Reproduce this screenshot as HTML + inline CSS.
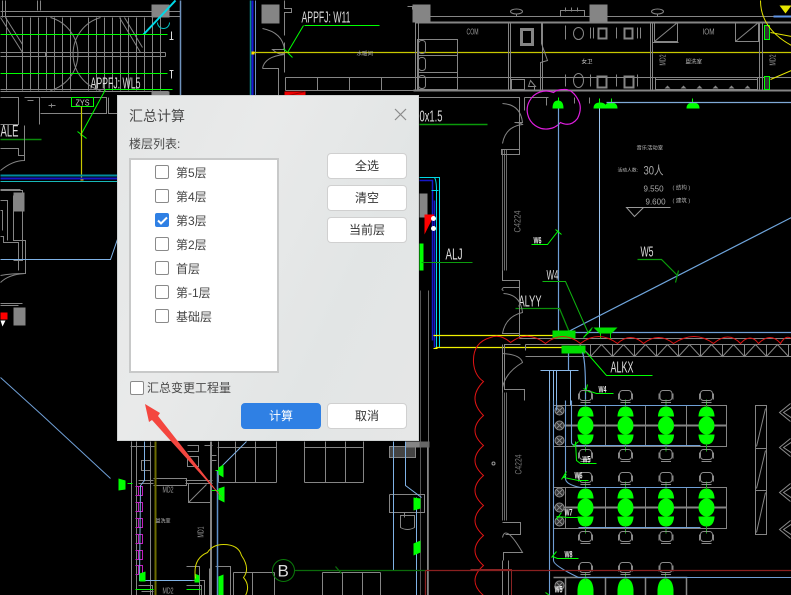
<!DOCTYPE html>
<html><head><meta charset="utf-8">
<style>
html,body{margin:0;padding:0;background:#000}
#p{position:relative;width:791px;height:595px;overflow:hidden;background:#000;font-family:"Liberation Sans","Noto Sans CJK SC",sans-serif}
svg.c{position:absolute;left:0;top:0;filter:blur(.3px)}
svg text{font-family:"Liberation Sans","Noto Sans CJK SC",sans-serif}
#d{position:absolute;left:117px;top:95px;width:302px;height:346px;box-sizing:border-box;border:1px solid #cfd2d2;background:linear-gradient(115deg,#e4e6e6,#e9eaea 35%,#e2e5e5 70%,#e6e7e7)}
#d div{position:absolute;box-sizing:border-box}
.t{color:#4a4a4a;white-space:nowrap}
#l{left:11px;top:62px;width:150px;height:215px;border:2px solid #c8c9c9;background:#fff}
.k{width:14px;height:14px;border:1px solid #8a8a8a;border-radius:2px;background:#fff}
.f{font-size:12px;line-height:18px;color:#444;white-space:nowrap}
.b{width:80px;height:26px;border:1px solid #d0d0d0;border-radius:4px;background:#fff;font-size:12px;line-height:24px;text-align:center;color:#333}
</style></head><body><div id="p">
<svg class="c" width="791" height="595" viewBox="0 0 791 595" fill="none">
<defs>
<g id="chair" stroke="#8a8a8a" stroke-width="1"><rect x="-6" y="-6" width="12" height="10" rx="3"/><path d="M-7-3V3M7-3V3M-5 6H5"/></g>
<g id="lt"><path d="M-8-10Q-7-19 0-19Q7-19 8-10Z" fill="#0f0"/><ellipse cx="0" cy="0" rx="8" ry="9" fill="#0f0"/><path d="M-8 10Q-7 19 0 19Q7 19 8 10Z" fill="#0f0"/><path d="M0-26V-18M0 18V26" stroke="#1fa51f"/><path d="M-8-9.500H8M-8 9.500H8" stroke="#0f0"/></g>
<g id="sc" stroke="#8a8a8a" fill="#333"><circle cx="0" cy="0" r="4.500"/><path d="M-3-3L3 3M3-3L-3 3"/></g>
<g id="mg" stroke="#c01fc0" stroke-width="1"><path d="M0 0H7V9H0M3 0V9"/></g>
<g id="chv" stroke="#8a8a8a"><path d="M12 0L1 9L12 18M14 3L5 9L14 15"/></g>
</defs>
<g transform="translate(.5 .5)">
<!-- left stairs -->
<g stroke="#858585" stroke-width="1">
<path d="M0 11H180M0 16H180M0 89H168M0 91H168M2 0V17M5 0V17M37 0V10M40 0V10"/>
<path d="M6 17V90M22 17V90M30 17V90M38 17V90M46 17V90M54 17V90M62 17V90M70 17V90M88 17V90M96 17V90M104 17V90M112 17V90M120 17V90M128 17V90M136 17V90M144 17V90M152 17V90M160 17V90"/>
<path d="M0 52H165M0 56H165M165 52V56M45 52V56"/>
<path d="M0 17L22 52M5 17L22 44M119 17L140 52M124 17L142 47"/>
<path d="M50 17A38 38 0 0 1 50 90M100 17A38 38 0 0 0 100 90"/>
<path d="M0 97H18V124H0M24 97H39V124M40 97H106V113H40M108 97V113H159"/>
<path d="M51 103V107M48 105H55M27 100H33M39 97V113"/>
</g>
<rect x="151" y="4" width="18" height="13" fill="#858585"/>
<rect x="151" y="91" width="18" height="5" fill="#858585"/>
<path d="M143 34L175 0" stroke="#00d9e8" stroke-width="2"/>
<path d="M157 22a6 6 0 0 0 12 0" stroke="#00c4c4"/>
<path d="M180 0V96" stroke="#6f93bd" stroke-width="1.500"/>
<path d="M0 34H167M0 73H167" stroke="#0f0"/>
<path d="M105 89H172M105 89L80 135M77 131L86 138" stroke="#0f0"/>
<rect x="71" y="97" width="22" height="9" stroke="#0f0"/>
<text x="75" y="105" font-size="8" fill="#ccc" textLength="14" lengthAdjust="spacingAndGlyphs">ZYS</text>
<path d="M81 106V178" stroke="#c8c800" stroke-width="1.200"/>
<rect x="80" y="177" width="3" height="3" fill="#ffd000"/>
<path d="M171 31V39M169 39H173M171 70V78M169 70H173" stroke="#ddd"/>
<text x="90" y="88" font-size="16" fill="#ddd" textLength="50" lengthAdjust="spacingAndGlyphs">APPFJ: WL5</text>
<text x="0" y="136" font-size="17" fill="#ddd" textLength="18" lengthAdjust="spacingAndGlyphs">ALE</text>
<path d="M0 139H41" stroke="#0a8a0a" stroke-width="1.500"/>
<path d="M0 175H117" stroke="#008b9c" stroke-width="2"/>
<path d="M0 178H117" stroke="#1717c8" stroke-width="2"/>
<path d="M0 181H117" stroke="#18b9b9"/>
<g stroke="#858585">
<path d="M0 148H18V155H24V125M0 170Q12 160 24 160V127"/>
<path d="M0 190H22V260H13M0 189H20M0 236H3V242H18V270M0 275Q10 273 25 273V240H13V195M0 200H7V240M0 210H2V230"/>
<path d="M0 303H22M0 305H18M0 282Q8 274 24 273"/>
</g>
<rect x="13" y="192" width="11" height="19" fill="#858585"/>
<rect x="13" y="307" width="12" height="18" fill="#858585"/>
<rect x="0" y="312" width="7" height="7" fill="#f00"/>
<path d="M0 320H5L2 326Z" fill="#fff"/>
<path d="M0 259H110L120 230" stroke="#7fb2e6"/>
<path d="M0 377L42 415L110 478" stroke="#6f9fd6"/>

<!-- center column -->
<path d="M250 0V96" stroke="#0a8a8a" stroke-width="1.500"/>
<path d="M252 0V96" stroke="#1717d8" stroke-width="2"/>
<path d="M255 0V96" stroke="#6f93bd"/>
<rect x="261" y="4" width="18" height="19" fill="#858585"/>
<g stroke="#858585">
<path d="M262 28Q282 32 284 49H272Q280 56 284 52M262 68Q264 56 284 54M262 68H278V96M284 0V8H291V12H284V35M284 42V72M285 77H791M285 90H791M285 77V90"/>
<path d="M317 77V90M349 77V90M381 77V90"/>
</g>
<path d="M303 25L287 52M283 48L292 57M304 25H379" stroke="#0f0"/>
<text x="301" y="22" font-size="16" fill="#ddd" textLength="49" lengthAdjust="spacingAndGlyphs">APPFJ: W11</text>
<path d="M252 52H791" stroke="#c8c800" stroke-width="1.300"/>
<rect x="251" y="51" width="3" height="3" fill="#ffe000"/>
<text x="356" y="55" font-size="5.500" fill="#aaa">水暖间</text>
<rect x="284" y="91" width="21" height="5" fill="#e00"/>
<path d="M305 91L284 96" stroke="#900"/>

<!-- rooms top right -->
<g stroke="#858585" stroke-width="1">
<path d="M407 6H412V9M430 16H589M607 16H791M430 22H508M510 22H650"/>
<path d="M415 22H791" stroke-width="2"/>
<path d="M413 90H791" stroke-width="2"/>
<path d="M400 97H517M524 97H548"/>
<path d="M415 22V90M418 22V90M508 22V90M510 22V90M650 22V90M652 22V90M759 22V90M762 22V90"/>
<rect x="417" y="39" width="40" height="50"/>
<path d="M417 55H457M417 72H457M418 39V89"/>
<rect x="418" y="40" width="7" height="13" rx="3"/><rect x="418" y="57" width="7" height="13" rx="3"/><rect x="418" y="75" width="7" height="13" rx="3"/>
<path d="M542 22V90M541 23V43L547 60L540 62V90"/>
<rect x="521" y="29" width="11" height="15" stroke-width="3"/>
<rect x="511" y="79" width="13" height="10"/>
<rect x="598" y="28" width="8" height="10" stroke-width="2"/><rect x="624" y="28" width="8" height="10" stroke-width="2"/>
<rect x="597" y="76" width="9" height="11" stroke-width="2"/><rect x="624" y="76" width="9" height="11" stroke-width="2"/>
<ellipse cx="578" cy="33" rx="5" ry="6"/><ellipse cx="578" cy="80" rx="5" ry="7"/>
<path d="M565 25V39M590 27V38M593 27V38M616 27V38M637 27V38M640 27V38M565 74V86M590 74V86M616 74V86M637 74V86"/>
<rect x="654" y="22" width="23" height="19"/><path d="M654 41L677 22"/>
<rect x="735" y="22" width="23" height="19"/><path d="M735 41L758 22"/>
<path d="M652 42H678"/>
<rect x="655" y="77" width="102" height="12"/><path d="M655 79H757"/>
<path d="M560 10H584V16H560ZM565 7V11M571 7V11M577 7V11"/>
<ellipse cx="516" cy="11" rx="6" ry="2.500"/><path d="M516 13V16"/><ellipse cx="657" cy="11" rx="6" ry="2.500"/><path d="M657 13V16"/>
<path d="M530 80L535 86H528ZM534 86V89"/>
<path d="M502 97H519V154H502M510 154H501V149H519"/>
<path d="M502 103Q520 104 522 122H514Q520 122 522 124Q505 126 502 143"/>
<path d="M502 149V270M504 149V270M506 149V270" stroke-width=".8"/>
<path d="M524 97V110M546 97V105M574 97V103M589 97V103"/>
</g>
<g fill="#858585"><rect x="412" y="4" width="18" height="18"/><rect x="589" y="4" width="18" height="18"/>
<path d="M664 88L667 85L670 88ZM680 88L683 85L686 88ZM696 88L699 85L702 88ZM712 88L715 85L718 88ZM728 88L731 85L734 88ZM744 88L747 85L750 88Z"/></g>
<text x="466" y="34" font-size="8" fill="#999" textLength="12" lengthAdjust="spacingAndGlyphs">COM</text>
<text x="702" y="34" font-size="8" fill="#999" textLength="12" lengthAdjust="spacingAndGlyphs">IOM</text>
<text x="581" y="63" font-size="5.500" fill="#ccc">女卫</text>
<text x="685" y="63" font-size="5.500" fill="#bbb">盥洗室</text>
<text x="0" y="0" transform="translate(665,65) rotate(-90)" font-size="8" fill="#999" textLength="11" lengthAdjust="spacingAndGlyphs">MD2</text>
<text x="0" y="0" transform="translate(775,65) rotate(-90)" font-size="8" fill="#999" textLength="11" lengthAdjust="spacingAndGlyphs">MD2</text>
<rect x="764" y="25" width="5" height="14" stroke="#0f0" fill="#333"/><rect x="764" y="76" width="5" height="13" stroke="#0f0" fill="#333"/>
<path d="M760 0Q760 28 791 45M770 32L791 36M770 79L791 70" stroke="#e6e600" stroke-width="1"/>
<path d="M779 5H791L785 13Z" fill="#e6e600"/>
<path d="M773 16H791" stroke="#5f95e6" stroke-width="2"/>
<path d="M553 92A19 19 0 1 0 560 122Q570 127 577 118Q582 108 578 100Q572 88 563 89Q556 89 553 92Z" stroke="#e01ee0" stroke-width="1.200"/>
<path d="M558 97V107M599 98V105M611 98V105M692 98V105" stroke="#0f0"/>
<g fill="#0f0"><path d="M552 108Q552 100 557.500 100Q563 100 563 108Z"/><path d="M593 108Q593 102 599.500 102Q606 102 606 108Z"/><path d="M604 108Q604 102 610.500 102Q617 102 617 108Z"/><path d="M686 108Q686 102 692.500 102Q699 102 699 108Z"/></g>
<path d="M606 102H791" stroke="#7fa9d6" stroke-width="1.200"/>
<path d="M558 108V333" stroke="#6f9fd6" stroke-width="1.200"/>
<path d="M599 108V332" stroke="#9cc4ef"/>
<path d="M419 124H487" stroke="#0a9a0a" stroke-width="1.500"/>
<text x="419" y="121" font-size="16" fill="#ddd" textLength="23" lengthAdjust="spacingAndGlyphs">0x1.5</text>
<text x="636" y="149" font-size="5.300" fill="#bbb">音乐活动室</text>
<text x="617" y="171" font-size="4.800" fill="#bbb">活动人数:</text>
<text x="643" y="174" font-size="12" fill="#aaa" textLength="20" lengthAdjust="spacingAndGlyphs">30人</text>
<text x="643" y="191" font-size="8" fill="#aaa">9.550</text>
<text x="645" y="204" font-size="8" fill="#aaa">9.600</text>
<text x="672" y="189" font-size="5.500" fill="#aaa">( 结构 )</text>
<text x="672" y="202" font-size="5.500" fill="#aaa">( 建筑 )</text>
<path d="M670 207H626L634 216L643 207" stroke="#999"/>

<!-- stair core right of dialog -->
<path d="M419 177H439V347M424 177H434Q436 180 436 190V347" stroke="#00d9e8" stroke-width="1"/>
<path d="M419 180H432V340" stroke="#1717c8" stroke-width="1.500"/>
<path d="M431 190H438" stroke="#00d9e8"/>
<path d="M434 200V347" stroke="#1717c8" stroke-width="1.500"/>
<rect x="419" y="193" width="8" height="24" fill="#858585"/>
<path d="M424 234V214L434 214Z" fill="#f00"/>
<circle cx="433" cy="218" r="2.500" fill="#fff"/><circle cx="433" cy="228" r="2.500" fill="#fff"/>
<rect x="419" y="243" width="4" height="27" fill="#0f0"/>
<path d="M421 262H472" stroke="#0c9c0c" stroke-width="1"/>
<text x="445" y="259" font-size="16" fill="#ddd" textLength="17" lengthAdjust="spacingAndGlyphs">ALJ</text>
<path d="M420 290V595" stroke="#555"/>
<path d="M428 290V595" stroke="#6a6a6a"/>
<path d="M433 335H555M435 347H565" stroke="#f0f000" stroke-width="1.200"/>
<path d="M433 348H437M433 335H437" stroke="#ff0"/>

<!-- W labels -->
<path d="M531 244H547L558 230M555 229L561 234" stroke="#0f0" stroke-width="1"/>
<text x="533" y="243" font-size="9" fill="#eee" font-weight="bold" textLength="8" lengthAdjust="spacingAndGlyphs">W6</text>
<path d="M568 331L791 217" stroke="#6fa5dc" stroke-width="1.200"/>
<path d="M570 332H791" stroke="#6f9fd6" stroke-width="1.200"/>
<path d="M637 259H661L677 275M678 270L675 282" stroke="#0b9b0b" stroke-width="1.200"/>
<text x="640" y="256" font-size="15" fill="#ddd" textLength="13" lengthAdjust="spacingAndGlyphs">W5</text>
<path d="M542 281H565L588 333M583 337L592 327" stroke="#0fb40f"/>
<text x="546" y="279" font-size="14" fill="#ddd" textLength="12" lengthAdjust="spacingAndGlyphs">W4</text>
<path d="M515 308H559L569 332" stroke="#0a8f0a" stroke-width="1.300"/>
<text x="518" y="306" font-size="16" fill="#ddd" textLength="23" lengthAdjust="spacingAndGlyphs">ALYY</text>
<g stroke="#858585">
<path d="M502 270V280H519V338M503 287H519V290M503 287Q500 289 503 290M503 293Q520 294 522 312Q505 316 502 333H519"/>
<path d="M519 338H791M525 344H791M525 356H791M525 344V350M579 344L590 356L601 344L612 356L623 344L634 356L645 344L656 356L667 344L678 356L689 344L700 356L711 344L722 356L733 344L744 356L755 344L766 356L777 344L788 356"/>
<path d="M590 344V356M612 344V356M634 344V356M656 344V356M678 344V356M700 344V356M722 344V356M744 344V356M766 344V356M788 344V356"/>
<path d="M520 344H504V389H520M502 344V392M504 389H524V400M502 353Q520 354 522 362Q505 372 502 387"/>
<path d="M502 392V520M504 392V520M506 392V520" stroke-width=".8"/>
<path d="M502 522H520V534H505M502 537Q505 523 522 552H503V560M502 560V595H508V560"/>
</g>
<rect x="552" y="330" width="23" height="8" fill="#0d0"/>
<rect x="561" y="345" width="24" height="8" fill="#0d0"/>
<path d="M593 327H617L611 333H599Z" fill="#0d0"/>
<path d="M600 333V338M610 333V338" stroke="#0d0"/>
<path d="M583 337L591 329" stroke="#0f0"/>
<path d="M586 352L606 375H652" stroke="#0f0"/>
<text x="610" y="372" font-size="16" fill="#ddd" textLength="23" lengthAdjust="spacingAndGlyphs">ALKX</text>
<path d="M568 353V370M582 352Q585 360 585 390V405" stroke="#6f9fd6" stroke-width="1.200"/>
<path d="M540 370H578M549 370V405M553 370V405M556 370V405M570 370V405" stroke="#8ab8e8"/>
<path d="M585 392L587 384M587 390L596 393H613M583 388L590 392" stroke="#0f0"/>
<text x="598" y="392" font-size="9" fill="#eee" font-weight="bold" textLength="8" lengthAdjust="spacingAndGlyphs">W4</text>

<!-- red cloud -->
<path d="M791 338Q785 334 780 343Q770 331 758 343Q750 332 740 343Q728 330 713 343Q694 329 673 343Q658 331 643 343Q630 331 617 343Q598 329 580 343Q562 329 545 343Q527 329 510 342Q500 333 490 337Q472 342 473 362Q474 375 483 381Q466 398 483 415Q466 430 483 445Q466 460 483 475Q466 490 483 505Q466 520 483 535Q466 550 483 565Q466 580 483 595" stroke="#e01414" stroke-width="1"/>
<!-- tables & lights -->
<g stroke="#858585" stroke-width="1">
<rect x="553" y="405" width="173" height="41"/><path d="M553 425H726" stroke-width="2"/><path d="M565 405V446M605 405V446M645 405V446M686 405V446"/>
<rect x="553" y="487" width="173" height="41"/><path d="M553 507H726" stroke-width="2"/><path d="M565 487V528M605 487V528M645 487V528M686 487V528"/>
<path d="M553 577H686V595M565 577V595M605 577V595M645 577V595" stroke-width="1.500"/>
<rect x="755" y="405" width="11" height="129"/><path d="M755 448H766M755 490H766M756 446L765 408M756 488L765 450M756 532L765 492"/>
</g>
<g><use href="#lt" x="585" y="425"/><use href="#lt" x="625" y="425"/><use href="#lt" x="665.500" y="425"/><use href="#lt" x="706" y="425"/>
<use href="#lt" x="585" y="507"/><use href="#lt" x="625" y="507"/><use href="#lt" x="665.500" y="507"/><use href="#lt" x="706" y="507"/></g>
<g fill="#0f0"><path d="M577 589Q578 578 585 578Q592 578 593 589V595H577Z"/><path d="M617 589Q618 578 625 578Q632 578 633 589V595H617Z"/><path d="M657 589Q658 578 665 578Q672 578 673 589V595H657Z"/></g>
<path d="M585 572V580M625 572V580M665 572V580" stroke="#1fa51f"/>
<g><use href="#chair" x="585" y="396"/><use href="#chair" x="625" y="396"/><use href="#chair" x="665.500" y="396"/><use href="#chair" x="706" y="396"/>
<use href="#chair" x="585" y="455"/><use href="#chair" x="625" y="455"/><use href="#chair" x="665.500" y="455"/><use href="#chair" x="706" y="455"/>
<use href="#chair" x="585" y="478"/><use href="#chair" x="625" y="478"/><use href="#chair" x="665.500" y="478"/><use href="#chair" x="706" y="478"/>
<use href="#chair" x="585" y="537"/><use href="#chair" x="625" y="537"/><use href="#chair" x="665.500" y="537"/><use href="#chair" x="706" y="537"/>
<use href="#chair" x="585" y="568"/><use href="#chair" x="625" y="568"/><use href="#chair" x="665.500" y="568"/></g>
<g><use href="#sc" x="559" y="410"/><use href="#sc" x="559" y="425"/><use href="#sc" x="559" y="440"/><use href="#sc" x="559" y="492"/><use href="#sc" x="559" y="507"/><use href="#sc" x="559" y="521"/><use href="#sc" x="559" y="585"/></g>
<g stroke="#6f9fd6" stroke-width="1.100"><path d="M549 400V595M553 400V560Q553 565 578 577H791M565 400V478Q565 484 580 487H700M571 400V442Q571 445 578 445H700M556 400V410M578 405H700M578 527H700"/></g>
<g stroke="#0f0"><path d="M575 441L576 460L580 463H596M572 446L578 441M566 474L563 477L578 480H588M561 479L566 471M556 516L568 517H580M556 519L561 512M552 556L557 558H578M551 557L556 551M545 592L552 597H568"/></g>
<g fill="#eee" font-weight="bold" font-size="9"><text x="582" y="462" textLength="8" lengthAdjust="spacingAndGlyphs">W5</text><text x="574" y="478" textLength="8" lengthAdjust="spacingAndGlyphs">W6</text><text x="564" y="515" textLength="8" lengthAdjust="spacingAndGlyphs">W7</text><text x="564" y="557" textLength="8" lengthAdjust="spacingAndGlyphs">W8</text><text x="554" y="592" textLength="8" lengthAdjust="spacingAndGlyphs">W5</text></g>
<g><use href="#chv" x="778" y="403"/><use href="#chv" x="778" y="438"/><use href="#chv" x="778" y="483"/><use href="#chv" x="778" y="520"/></g>
<text x="0" y="0" transform="translate(520,232) rotate(-90)" font-size="9" fill="#777" textLength="22" lengthAdjust="spacingAndGlyphs">C4224</text>
<text x="0" y="0" transform="translate(521,474) rotate(-90)" font-size="9" fill="#777" textLength="20" lengthAdjust="spacingAndGlyphs">C4224</text>
<circle cx="493" cy="463" r="1.500" stroke="#999"/>
<path d="M470 569H511V595" stroke="#8a2424" stroke-width="1"/>

<!-- bottom area -->
<g stroke="#858585">
<path d="M131 441V595M136 441V595M150 441V595M210 441V595M211 441V595M155 441V446H130"/>
<path d="M138 480H153M138 483H153M185 480H212M185 483H212M153 478H186V485H153"/>
<path d="M188 483V502H210M188 502L206 484"/>
<path d="M235 441V482M255 441V482M276 441V482M304 441V482M325 441V482M345 441V482M363 441V482M218 441V482M217 447H276M304 447H363M235 482H276M304 482H363M218 482H235"/>
<path d="M187 445H198V451H187M187 456H198V466H187ZM141 460H150V470H141Z"/>
<path d="M204 445H212M210 460H216M210 455H216"/>
<rect x="389" y="446" width="26" height="11" fill="#444"/>
<path d="M389 494H424V512H389V494M404 512V517M400 515H414V527Q407 531 400 527Z"/>
<path d="M233 572H252M233 572V595M252 572V595M274 572V595M252 572H274M322 572H380M322 572V595M342 572V595M362 572V595M380 572V595"/>
<path d="M215 566H230V595M209 568V595M186 566H199V595M188 580H204V595"/>
<path d="M138 585H152V595M141 591H153M186 585H201V595"/>
<path d="M427 441V595M416 441V445H427"/>
</g>
<rect x="405" y="441" width="22" height="6" fill="#858585"/>
<rect x="419" y="441" width="10" height="6" fill="#666"/>
<g><use href="#mg" x="135" y="486"/><use href="#mg" x="135" y="502"/><use href="#mg" x="135" y="518"/><use href="#mg" x="135" y="534"/><use href="#mg" x="135" y="550"/><use href="#mg" x="135" y="565"/></g>
<path d="M155 441V595" stroke="#6b6b00" stroke-width="2"/>
<path d="M144 441V480L140 485L139 580H192" stroke="#7fb2e6"/>
<path d="M246 441L220 467M393 441V570M405 441V485L421 497M416 497V595" stroke="#7fb2e6"/>
<path d="M217 470V595" stroke="#5f8fc8" stroke-width="1.500"/>
<path d="M118 478L125 480V489L118 490Z" fill="#0f0"/>
<path d="M127 483H132M215 470H219M211 490H222" stroke="#0f0"/>
<path d="M218 467L223 464V477L218 474Z" fill="#0f0"/>
<path d="M218 488L224 486V502L218 499Z" fill="#0f0"/>
<path d="M413 497L420 498V508L413 510ZM413 543L420 540V552L413 555ZM139 573L145 571V581H139ZM194 573L199 575V582H194Z" fill="#0f0"/>
<path d="M218 576L223 574V595H218Z" fill="#0f0"/>
<path d="M135 589H153M186 589H200" stroke="#0f0"/>
<circle cx="283" cy="570" r="11" stroke="#0a7a0a"/>
<text x="277" y="576" font-size="17" fill="#ddd">B</text>
<path d="M294 570H425M335 566L341 573" stroke="#0b6b0b" stroke-width="1.300"/>
<path d="M425 570H791M425 570V595" stroke="#8a2020" stroke-width="1.300"/>
<path d="M195 578Q192 558 207 552Q212 544 223 544Q238 544 241 555Q250 568 243 577Q250 585 245 595" stroke="#d8d800" stroke-width="1"/>
<text x="162" y="492" font-size="8" fill="#999" textLength="11" lengthAdjust="spacingAndGlyphs">MD2</text>
<text x="162" y="593" font-size="8" fill="#999" textLength="11" lengthAdjust="spacingAndGlyphs">MD2</text>
<text x="155" y="522" font-size="5" fill="#bbb">盥洗室</text>
<text x="0" y="0" transform="translate(203,537) rotate(-90)" font-size="8" fill="#999" textLength="11" lengthAdjust="spacingAndGlyphs">MD1</text>
</g>
</svg>

<div id="d">
<div class="t" style="left:11px;top:10px;font-size:14px;line-height:20px">汇总计算</div>
<svg style="position:absolute;left:276px;top:12px" width="13" height="13" viewBox="0 0 13 13"><path d="M1 1L12 12M12 1L1 12" stroke="#8a8a8a" stroke-width="1.200"/></svg>
<div class="t" style="left:11px;top:39px;font-size:12px;line-height:18px">楼层列表:</div>
<div id="l"></div>
<div class="k" style="left:37px;top:69px"></div><div class="f" style="left:58px;top:68px">第5层</div>
<div class="k" style="left:37px;top:93px"></div><div class="f" style="left:58px;top:92px">第4层</div>
<div class="k" style="left:37px;top:117px;background:#2f80e4;border-color:#2f80e4"></div>
<svg style="position:absolute;left:39px;top:120px" width="11" height="9" viewBox="0 0 11 9"><path d="M1 4.500L4 7.500L10 1.500" stroke="#fff" stroke-width="2" fill="none"/></svg>
<div class="f" style="left:58px;top:116px">第3层</div>
<div class="k" style="left:37px;top:141px"></div><div class="f" style="left:58px;top:140px">第2层</div>
<div class="k" style="left:37px;top:165px"></div><div class="f" style="left:58px;top:164px">首层</div>
<div class="k" style="left:37px;top:189px"></div><div class="f" style="left:58px;top:188px">第-1层</div>
<div class="k" style="left:37px;top:213px"></div><div class="f" style="left:58px;top:212px">基础层</div>
<div class="b" style="left:209px;top:57px">全选</div>
<div class="b" style="left:209px;top:89px">清空</div>
<div class="b" style="left:209px;top:121px">当前层</div>
<div class="k" style="left:12px;top:285px"></div>
<div class="t" style="left:29px;top:283px;font-size:12px;line-height:18px">汇总变更工程量</div>
<div class="b" style="left:123px;top:307px;background:#2f80e4;border-color:#2f80e4;color:#fff">计算</div>
<div class="b" style="left:209px;top:307px">取消</div>
</div>

<svg style="position:absolute;left:0;top:0" width="791" height="595" viewBox="0 0 791 595"><path d="M145 404L160 413L158 416L224 500L152 420L149 422Z" fill="#f4463f"/></svg>
</div></body></html>
